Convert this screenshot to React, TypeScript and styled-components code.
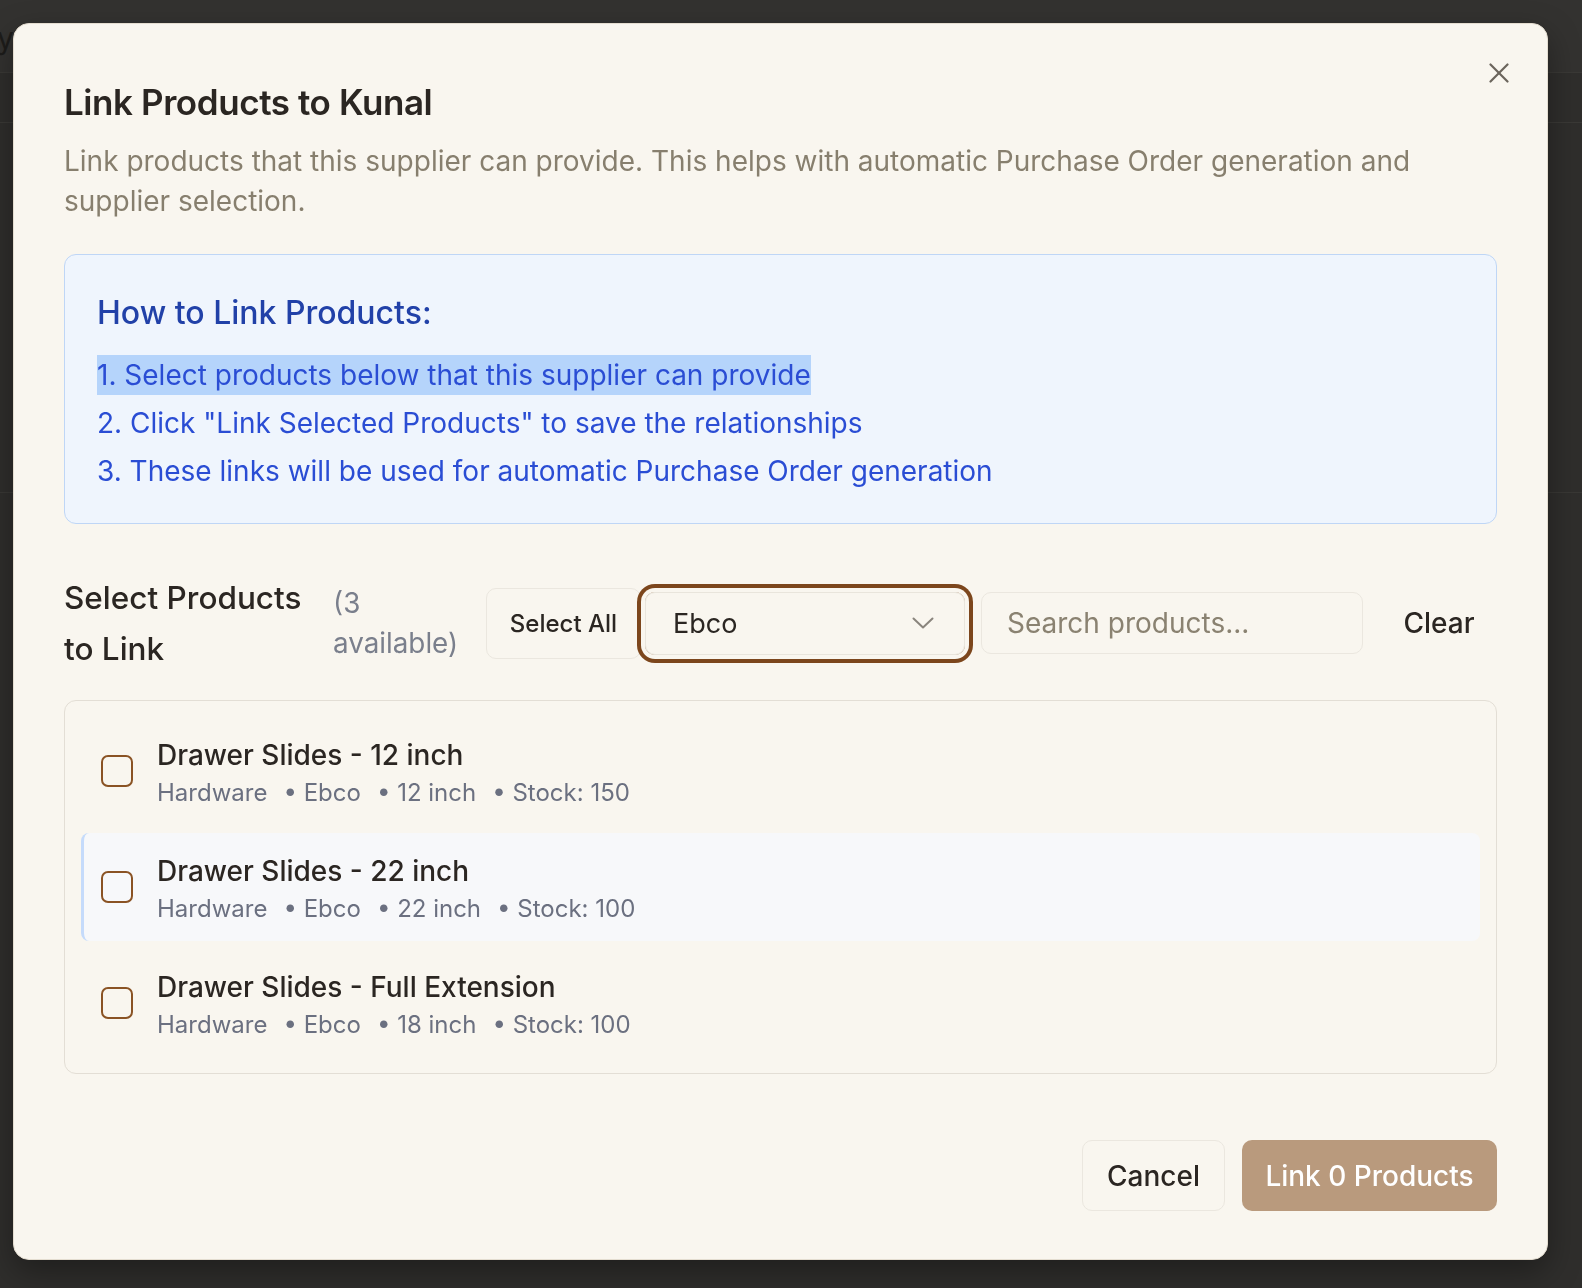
import styled, { createGlobalStyle } from "styled-components";

interface IProduct {
  id: number;
  name: string;
  category: string;
  brand: string;
  size: string;
  stock: number;
}

const products: IProduct[] = [
  { id: 1, name: "Drawer Slides - 12 inch", category: "Hardware", brand: "Ebco", size: "12 inch", stock: 150 },
  { id: 2, name: "Drawer Slides - 22 inch", category: "Hardware", brand: "Ebco", size: "22 inch", stock: 100 },
  { id: 3, name: "Drawer Slides - Full Extension", category: "Hardware", brand: "Ebco", size: "18 inch", stock: 100 },
];

const GlobalStyle = createGlobalStyle`
  html, body {
    margin: 0;
    padding: 0;
    background: #2f2e2c;
    font-family: Inter, "Noto Sans", sans-serif;
  }
  * {
    box-sizing: border-box;
  }
`;

const Page = styled.div`
  width: 1582px;
  height: 1288px;
  overflow: hidden;
  background: #2f2e2c;
`;

const BgHeader = styled.div`
  height: 73px;
  background: #333230;
  border-bottom: 1px solid #3a3936;
  display: flex;
  align-items: flex-start;
`;

const BgLetter = styled.span`
  margin-left: -3px;
  margin-top: 20px;
  font-size: 30px;
  color: #1d1c1a;
`;

const BgToolbar = styled.div`
  height: 50px;
  border-bottom: 1px solid #3a3936;
`;

const BgSection = styled.div`
  height: 370px;
  border-bottom: 1px solid #393835;
`;

const Overlay = styled.div`
  position: fixed;
  inset: 0;
  padding: 23px 0 0 13px;
`;

const Dialog = styled.div`
  position: relative;
  width: 1535px;
  height: 1237px;
  background: #f9f6ef;
  border: 1px solid #e4ddd0;
  border-radius: 16px;
  padding: 56px 50px 48px;
  display: flex;
  flex-direction: column;
  box-shadow: 0 12px 32px rgba(0, 0, 0, 0.35);
`;

const CloseBtn = styled.button`
  position: absolute;
  top: 33px;
  right: 32px;
  width: 32px;
  height: 32px;
  padding: 0;
  border: none;
  background: transparent;
  display: flex;
  align-items: center;
  justify-content: center;
  color: #6b655c;
  cursor: pointer;
`;

const Title = styled.h2`
  margin: 0;
  font-size: 35px;
  line-height: 44px;
  font-weight: 600;
  letter-spacing: -0.012em;
  color: #2b2622;
`;

const Description = styled.p`
  margin: 17px 0 0;
  font-size: 28px;
  line-height: 40px;
  color: #877f6e;
`;

const InfoBox = styled.div`
  margin-top: 33px;
  border: 1.5px solid #bfd6f6;
  border-radius: 12px;
  background: #eff5fd;
  padding: 36px 32px 32px;
`;

const InfoTitle = styled.h4`
  margin: 0;
  font-size: 32px;
  line-height: 44px;
  font-weight: 500;
  color: #2141a8;
`;

const InfoList = styled.div`
  margin-top: 20px;
  display: flex;
  flex-direction: column;
  gap: 8px;
`;

const InfoItem = styled.div`
  font-size: 28px;
  line-height: 40px;
  color: #2a4dd4;
`;

const Highlight = styled.span`
  display: inline-block;
  background: #b5d4fb;
`;

const Toolbar = styled.div`
  margin-top: 48px;
  display: flex;
  align-items: center;
`;

const SectionLabel = styled.h3`
  margin: 0;
  width: 262px;
  flex-shrink: 0;
  font-size: 31.5px;
  line-height: 51px;
  font-weight: 500;
  color: #2b2622;
`;

const Available = styled.span`
  margin-left: 7px;
  width: 130px;
  flex-shrink: 0;
  font-size: 27.8px;
  line-height: 40px;
  color: #7a7f8c;
`;

const OutlineBtn = styled.button<{ $h: number; $w: number; $size: number; $ml?: number }>`
  margin-left: ${(p) => p.$ml ?? 0}px;
  height: ${(p) => p.$h}px;
  width: ${(p) => p.$w}px;
  flex-shrink: 0;
  border: 1.5px solid #ebe7df;
  border-radius: 10px;
  background: #f9f6ef;
  font-family: inherit;
  font-size: ${(p) => p.$size}px;
  font-weight: 500;
  color: #2b2622;
  cursor: pointer;
`;

const SelectBox = styled.div`
  margin-left: 4px;
  width: 320px;
  height: 63px;
  flex-shrink: 0;
  border: 1.5px solid #e9e5dc;
  border-radius: 10px;
  display: flex;
  align-items: center;
  justify-content: space-between;
  padding: 0 30px 0 27px;
  font-size: 27px;
  color: #2b2622;
  box-shadow: 0 0 0 4px #f9f6ef, 0 0 0 8px #7c461c;
`;

const SearchInput = styled.input`
  margin-left: 16px;
  width: 382px;
  height: 62px;
  flex-shrink: 0;
  border: 1.5px solid #ebe7df;
  border-radius: 10px;
  background: #f9f6ef;
  padding: 0 25px;
  font-family: inherit;
  font-size: 28px;
  color: #2b2622;
  outline: none;
  &::placeholder {
    color: #8a8271;
  }
`;

const GhostBtn = styled.button`
  margin-left: 17px;
  width: 118px;
  height: 62px;
  flex-shrink: 0;
  border: none;
  background: transparent;
  font-family: inherit;
  font-size: 28px;
  font-weight: 500;
  color: #2b2622;
  cursor: pointer;
`;

const ProductList = styled.div`
  margin-top: 26px;
  border: 1.5px solid #e3ded5;
  border-radius: 12px;
  padding: 16px 16px;
  display: flex;
  flex-direction: column;
  gap: 8px;
`;

const Row = styled.label<{ $hover: boolean }>`
  display: flex;
  align-items: center;
  height: 108px;
  padding-left: ${(p) => (p.$hover ? 17 : 20)}px;
  border-radius: 8px;
  background: ${(p) => (p.$hover ? "#f7f8fa" : "transparent")};
  border-left: ${(p) => (p.$hover ? "3px solid #c5dbfb" : "none")};
  cursor: pointer;
`;

const CheckBox = styled.span`
  width: 32px;
  height: 32px;
  flex-shrink: 0;
  border: 2px solid #8a5324;
  border-radius: 7px;
`;

const RowText = styled.div`
  margin-left: 24px;
  padding-top: 4px;
  display: flex;
  flex-direction: column;
`;

const ProductName = styled.div`
  font-size: 28px;
  line-height: 40px;
  font-weight: 500;
  color: #2b2622;
`;

const Meta = styled.div`
  display: flex;
  gap: 16px;
  font-size: 24px;
  line-height: 36px;
  color: #6b7080;
`;

const Footer = styled.div`
  margin-top: auto;
  display: flex;
  justify-content: flex-end;
  gap: 17px;
`;

const PrimaryBtn = styled.button`
  height: 71px;
  width: 255px;
  border: none;
  border-radius: 10px;
  background: #b99a7d;
  font-family: inherit;
  font-size: 28px;
  font-weight: 500;
  color: #ffffff;
  cursor: not-allowed;
`;

function App() {
  return (
    <>
      <GlobalStyle />
      <Page>
        <BgHeader>
          <BgLetter>y</BgLetter>
        </BgHeader>
        <BgToolbar />
        <BgSection />
      </Page>
      <Overlay>
        <Dialog>
          <CloseBtn aria-label="Close">
            <svg width="20" height="20" viewBox="0 0 20 20" fill="none" stroke="currentColor" strokeWidth="2.2" strokeLinecap="round">
              <line x1="1.5" y1="1.5" x2="18.5" y2="18.5" />
              <line x1="18.5" y1="1.5" x2="1.5" y2="18.5" />
            </svg>
          </CloseBtn>
          <Title>Link Products to Kunal</Title>
          <Description>
            Link products that this supplier can provide. This helps with automatic Purchase Order generation and
            supplier selection.
          </Description>

          <InfoBox>
            <InfoTitle>How to Link Products:</InfoTitle>
            <InfoList>
              <InfoItem>
                <Highlight>1. Select products below that this supplier can provide</Highlight>
              </InfoItem>
              <InfoItem>2. Click "Link Selected Products" to save the relationships</InfoItem>
              <InfoItem>3. These links will be used for automatic Purchase Order generation</InfoItem>
            </InfoList>
          </InfoBox>

          <Toolbar>
            <SectionLabel>Select Products to Link</SectionLabel>
            <Available>(3 available)</Available>
            <OutlineBtn $h={71} $w={155} $size={24} $ml={23}>
              Select All
            </OutlineBtn>
            <SelectBox>
              <span>Ebco</span>
              <svg width="22" height="12" viewBox="0 0 22 12" fill="none" stroke="#8a857d" strokeWidth="2" strokeLinecap="round" strokeLinejoin="round">
                <polyline points="1.5,1.5 11,10.5 20.5,1.5" />
              </svg>
            </SelectBox>
            <SearchInput placeholder="Search products..." />
            <GhostBtn>Clear</GhostBtn>
          </Toolbar>

          <ProductList>
            {products.map((p) => (
              <Row key={p.id} $hover={p.id === 2}>
                <CheckBox />
                <RowText>
                  <ProductName>{p.name}</ProductName>
                  <Meta>
                    <span>{p.category}</span>
                    <span>• {p.brand}</span>
                    <span>• {p.size}</span>
                    <span>• Stock: {p.stock}</span>
                  </Meta>
                </RowText>
              </Row>
            ))}
          </ProductList>

          <Footer>
            <OutlineBtn $h={71} $w={143} $size={28}>
              Cancel
            </OutlineBtn>
            <PrimaryBtn>Link 0 Products</PrimaryBtn>
          </Footer>
        </Dialog>
      </Overlay>
    </>
  );
}

export default App;
